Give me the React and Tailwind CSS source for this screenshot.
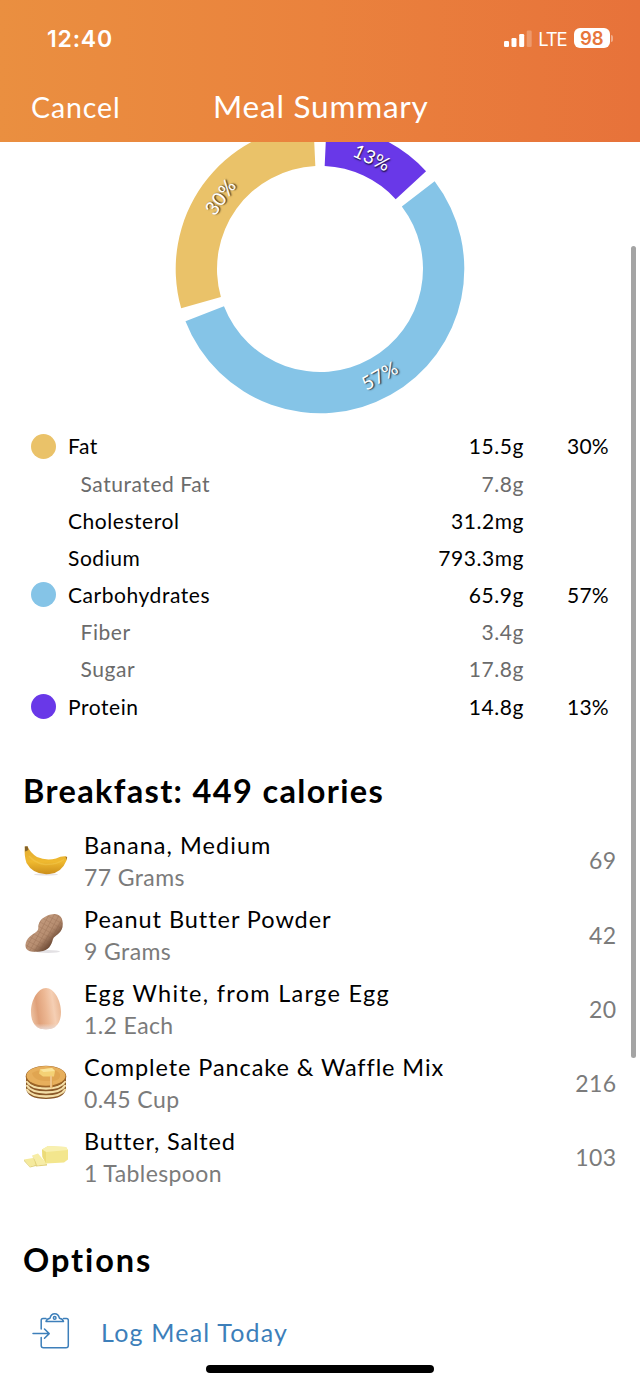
const nutrients = [
  { name: 'Fat', amount: '15.5g', percent: '30%', dot: 'bg-[#eac269]' },
  { name: 'Saturated Fat', amount: '7.8g', sub: true },
  { name: 'Cholesterol', amount: '31.2mg' },
  { name: 'Sodium', amount: '793.3mg' },
  { name: 'Carbohydrates', amount: '65.9g', percent: '57%', dot: 'bg-[#85c4e7]' },
  { name: 'Fiber', amount: '3.4g', sub: true },
  { name: 'Sugar', amount: '17.8g', sub: true },
  { name: 'Protein', amount: '14.8g', percent: '13%', dot: 'bg-[#6938e8]' },
];

const foods = [
  { name: 'Banana, Medium', serving: '77 Grams', calories: 69, Icon: Banana, tracking: 'tracking-[1.050px]' },
  { name: 'Peanut Butter Powder', serving: '9 Grams', calories: 42, Icon: Peanut, tracking: 'tracking-[0.950px]' },
  { name: 'Egg White, from Large Egg', serving: '1.2 Each', calories: 20, Icon: Egg, tracking: 'tracking-[1.300px]' },
  { name: 'Complete Pancake & Waffle Mix', serving: '0.45 Cup', calories: 216, Icon: Pancakes, tracking: 'tracking-[0.920px]' },
  { name: 'Butter, Salted', serving: '1 Tablespoon', calories: 103, Icon: Butter, tracking: 'tracking-[0.850px]' },
];

const slices = [
  { from: 2.6, to: 47.3, color: '#6938e8', label: '13%', turn: 0 },
  { from: 52.6, to: 248.8, color: '#85c4e7', label: '57%', turn: -180 },
  { from: 254.2, to: 357.4, color: '#eac269', label: '30%', turn: 0 },
];

const point = (angle, r) => {
  const a = (angle * Math.PI) / 180;
  return [150 + r * Math.sin(a), 150 - r * Math.cos(a)];
};

function Slice({ from, to, color }) {
  const large = to - from > 180 ? 1 : 0;
  const d = `M${point(from, 144.3)} A144.3 144.3 0 ${large} 1 ${point(to, 144.3)} L${point(to, 103)} A103 103 0 ${large} 0 ${point(from, 103)} Z`;
  return <path d={d} fill={color} />;
}

function Donut() {
  return (
    <svg width="300" height="300" viewBox="0 0 300 300" className="-mt-[23px] shrink-0">
      {slices.map((s) => (
        <Slice key={s.label} {...s} />
      ))}
      {slices.map((s) => {
        const mid = (s.from + s.to) / 2;
        const [x, y] = point(mid, 122.5);
        return (
          <text
            key={s.label}
            transform={`translate(${x} ${y}) rotate(${mid + s.turn})`}
            y="6.5"
            textAnchor="middle"
            fill="#fff"
            fontSize="19"
            letterSpacing="0.4"
            className="[text-shadow:1px_1px_1.5px_rgba(0,0,0,0.8)]"
          >
            {s.label}
          </text>
        );
      })}
    </svg>
  );
}

function Banana() {
  return (
    <svg width="44" height="44" viewBox="0 0 44 44">
      <defs>
        <linearGradient id="ban" x1="0" y1="0" x2="0" y2="1">
          <stop offset="0" stopColor="#e2ac35" />
          <stop offset=".55" stopColor="#efb92f" />
          <stop offset="1" stopColor="#cc8f1c" />
        </linearGradient>
      </defs>
      <ellipse cx="22" cy="35.500" rx="12" ry="1" fill="#e6e2e6" />
      <path d="M.8 7.500 L3.600 7.500 Q6 13.500 13 18 Q22 22 32 19.500 Q37 17 41.500 17.300 Q43.500 18 42.500 21.500 Q37.500 34 25.500 35 Q9.500 36.500 2.500 24 Q0 17 .8 7.500Z" fill="url(#ban)" />
      <path d="M5 17 Q11 24 21 25.500 Q32 26 40 20.500" fill="none" stroke="#f4cc55" strokeWidth="1.500" opacity=".45" />
      <path d="M.8 7.500 L3.600 7.300 L4.400 11 L1.200 12.500Z" fill="#82602a" />
      <path d="M41.500 17.400 L43.200 18 L42.500 21Z" fill="#a27023" />
    </svg>
  );
}

function Peanut() {
  return (
    <svg width="44" height="44" viewBox="0 0 44 44">
      <defs>
        <linearGradient id="pea" x1="0" y1="0" x2="1" y2="1">
          <stop offset="0" stopColor="#cba487" />
          <stop offset=".55" stopColor="#b68d70" />
          <stop offset=".75" stopColor="#6d4a35" />
          <stop offset="1" stopColor="#4d3325" />
        </linearGradient>
        <pattern id="mesh" width="4.500" height="4.500" patternUnits="userSpaceOnUse" patternTransform="rotate(28)">
          <path d="M0 0H4.500M0 0V4.500" stroke="#84583f" strokeWidth="1.100" fill="none" opacity=".45" />
        </pattern>
      </defs>
      <ellipse cx="24" cy="38.500" rx="12" ry="1.500" fill="#e3e1e4" />
      <path d="M14.500 12 C16 5 24 1 31 1 C38 1.500 39.500 8 38.500 14 C37 21 31 22 29 26 C27.500 32 25 37.500 16 38.500 C7 39.500 1 38 1.500 32 C2 25 8 22 12 19 C15 17 14 15 14.500 12Z" fill="url(#pea)" />
      <path d="M14.500 12 C16 5 24 1 31 1 C38 1.500 39.500 8 38.500 14 C37 21 31 22 29 26 C27.500 32 25 37.500 16 38.500 C7 39.500 1 38 1.500 32 C2 25 8 22 12 19 C15 17 14 15 14.500 12Z" fill="url(#mesh)" />
    </svg>
  );
}

function Egg() {
  return (
    <svg width="44" height="44" viewBox="0 0 44 44">
      <defs>
        <linearGradient id="egg" x1="0" y1=".6" x2="1" y2=".4">
          <stop offset="0" stopColor="#ecc0a0" />
          <stop offset=".22" stopColor="#dfa079" />
          <stop offset=".5" stopColor="#ecb793" />
          <stop offset=".75" stopColor="#f5cfb4" />
          <stop offset="1" stopColor="#e9b591" />
        </linearGradient>
        <linearGradient id="eggBase" x1="0" y1="0" x2="0" y2="1">
          <stop offset=".86" stopColor="#efdcd3" stopOpacity="0" />
          <stop offset="1" stopColor="#e6d6d2" />
        </linearGradient>
      </defs>
      <path d="M22 1 C30 1 37 13 37 25 C37 32 35 36.500 32 39 Q30 42 22 42.300 Q14 42 12 39 C9 36.500 7 32 7 25 C7 13 14 1 22 1Z" fill="url(#egg)" />
      <path d="M22 1 C30 1 37 13 37 25 C37 32 35 36.500 32 39 Q30 42 22 42.300 Q14 42 12 39 C9 36.500 7 32 7 25 C7 13 14 1 22 1Z" fill="url(#eggBase)" />
    </svg>
  );
}

function Pancakes() {
  return (
    <svg width="44" height="44" viewBox="0 0 44 44">
      <path d="M2 16 V27 Q3 38 22 38 Q41 38 42 27 V16Z" fill="#8a5828" />
      {[20, 24, 28].map((y) => (
        <path key={y} d={`M2.500 ${y} Q7 ${y + 7.5} 22 ${y + 7.5} Q37 ${y + 7.5} 41.500 ${y}`} fill="none" stroke="#f4dfa8" strokeWidth="2.300" />
      ))}
      <ellipse cx="22" cy="15.500" rx="20.300" ry="10.800" fill="#9c6427" />
      <ellipse cx="22" cy="14.800" rx="19.500" ry="9.900" fill="#e7af5c" />
      <path d="M8 12 Q15 8 21 10 Q32 7 36 13 Q37 19 29 20 V26 Q28 29 26.500 26 V20 Q10 21 8 12Z" fill="#dc9f4a" opacity=".6" />
      <path d="M16 8.500 L28 7 L31 10 L30 15.500 L19 15.500 L15 12.500Z" fill="#f4d175" />
      <path d="M16 8.500 L28 7 L31 10 L19.500 11Z" fill="#fae59b" />
      <path d="M27 15.500 V26" stroke="#f0c68d" strokeWidth="1.800" strokeLinecap="round" />
    </svg>
  );
}

function Butter() {
  return (
    <svg width="44" height="44" viewBox="0 0 44 44">
      <path d="M0 24.500 L9 23 L14 29 L6 31.500Z" fill="#f5ea9c" />
      <path d="M0 24.500 L6 31.500 L14 29 V30.500 L6 32.500 L0 26Z" fill="#e3d47c" />
      <path d="M8 20.500 L14 18.500 L23 29 L13 30.500 Q12 25 8 20.500Z" fill="#f7eda6" />
      <path d="M8 20.500 Q12 25 13 30.500 L23 29 V30.500 L12 31.500 Q11 26 8 20.500Z" fill="#e3d27a" />
      <path d="M18 14.500 L24 11 L42 12 L44 15 V24.500 L40 27.500 L22 28.500 L18.500 22Z" fill="#f3e68d" />
      <path d="M18 14.500 L24 11 L42 12 L44 15 L22 17Z" fill="#f8f0b0" />
      <path d="M18 14.500 L22 17 V28.500 L18.500 22Z" fill="#ecdb78" />
    </svg>
  );
}

function Signal() {
  return (
    <svg width="28" height="18" viewBox="0 0 28 18" fill="#fff">
      <rect x="0" y="12" width="5" height="6" rx="1.300" />
      <rect x="7.500" y="9" width="5" height="9" rx="1.300" />
      <rect x="15.200" y="5" width="5" height="13" rx="1.300" />
      <rect x="22.700" y="1.500" width="5" height="16.500" rx="1.300" opacity=".25" />
    </svg>
  );
}

function ClipboardIcon() {
  return (
    <svg width="38" height="38" viewBox="0 0 38 38" fill="none" stroke="#3d7fba" strokeWidth="1.500" strokeLinecap="round" strokeLinejoin="round">
      <path d="M14 5.500 H11 Q9.200 5.500 9.200 7.300 V16 M9.200 24.500 V32.500 Q9.200 34.800 11.500 34.800 H34 Q36.300 34.800 36.300 32.500 V7.300 Q36.300 5.500 34.500 5.500 H31.500" />
      <path d="M14 8.600 Q14.500 5.800 18 5.200 Q19 .8 22.700 .8 Q26.400 .8 27.400 5.200 Q31 5.800 31.500 8.600Z" />
      <circle cx="22.700" cy="4.900" r="1.300" />
      <path d="M1 20.600 H17 M12.500 16 L17.200 20.600 L12.500 25.200" />
    </svg>
  );
}

export default function App() {
  return (
    <div className="relative flex h-[1385px] w-[640px] flex-col overflow-hidden bg-white font-['Lato',sans-serif] text-black">
      <header className="flex h-[142px] shrink-0 flex-col bg-linear-to-r from-[#ea8f40] via-[#ea823d] to-[#e7723a] text-white">
        <div className="flex h-[55px] items-end justify-between pr-[27px] pl-[47px]">
          <span className="font-['Inter',sans-serif] text-[23px] leading-[32px] font-semibold tracking-[0.8px]">12:40</span>
          <div className="flex h-[34px] items-center">
            <Signal />
            <span className="ml-[6px] pt-[2px] font-['Inter',sans-serif] text-[18.500px] leading-none tracking-[-1.2px]">LTE</span>
            <span className="ml-[7px] flex h-[20.500px] w-[36.500px] items-center justify-center rounded-[6px] bg-white font-['Inter',sans-serif] text-[18.500px] leading-none font-semibold text-[#e7763b]">98</span>
            <span className="ml-[1px] h-[7px] w-[2px] rounded-r-full bg-white/40" />
          </div>
        </div>
        <div className="flex h-[87px] items-center">
          <span className="w-[182px] pt-[17px] pl-[31px] text-[28.500px] leading-none tracking-[0.900px]">Cancel</span>
          <h1 className="pt-[16px] pl-[31px] text-[31.500px] leading-none tracking-[0.800px]">Meal Summary</h1>
        </div>
      </header>

      <div className="flex h-[285.500px] shrink-0 justify-center overflow-hidden">
        <Donut />
      </div>

      <section className="flex flex-col text-[21px] tracking-[0.550px]">
        {nutrients.map((n) => (
          <div key={n.name} className={`flex h-[37.200px] items-center ${n.sub ? 'text-[#6b6b6b]' : 'text-black'}`}>
            <span className={`ml-[31px] size-[25px] rounded-full ${n.dot ?? ''}`} />
            <span className={`flex-1 ${n.sub ? 'pl-[24.500px]' : 'pl-[12px]'}`}>{n.name}</span>
            <span className="text-right">{n.amount}</span>
            <span className="w-[116px] pr-[31px] text-right tracking-[0.300px]">{n.percent}</span>
          </div>
        ))}
      </section>

      <section className="mt-[42px]">
        <h2 className="pl-[23px] text-[32.500px] leading-[48px] font-bold tracking-[1.350px]">Breakfast: 449 calories</h2>
        <div className="mt-[8.500px] flex flex-col">
          {foods.map(({ name, serving, calories, Icon, tracking }) => (
            <div key={name} className="flex h-[74.200px] items-center pr-[23.500px] pl-[24px]">
              <Icon />
              <div className="flex flex-1 flex-col pl-[16px] text-[23px] leading-[32px]">
                <span className={`text-[23.500px] ${tracking}`}>{name}</span>
                <span className="tracking-[0.400px] text-[#7b7b7b]">{serving}</span>
              </div>
              <span className="text-[23px] tracking-[0.400px] text-[#7b7b7b]">{calories}</span>
            </div>
          ))}
        </div>
      </section>

      <section className="mt-[42px]">
        <h2 className="pl-[23px] text-[32.500px] leading-[48px] font-bold tracking-[1.900px]">Options</h2>
        <div className="mt-[22px] flex h-[52px] items-center pl-[32px] text-[#3d7fba]">
          <ClipboardIcon />
          <span className="pl-[31px] text-[25px] tracking-[1.200px]">Log Meal Today</span>
        </div>
      </section>

      <div className="absolute top-[246px] left-[631px] h-[812px] w-[5px] rounded-full bg-[#a4a4a4]" />
      <div className="absolute top-[1365px] left-[206px] h-[8px] w-[228px] rounded-full bg-black" />
    </div>
  );
}
